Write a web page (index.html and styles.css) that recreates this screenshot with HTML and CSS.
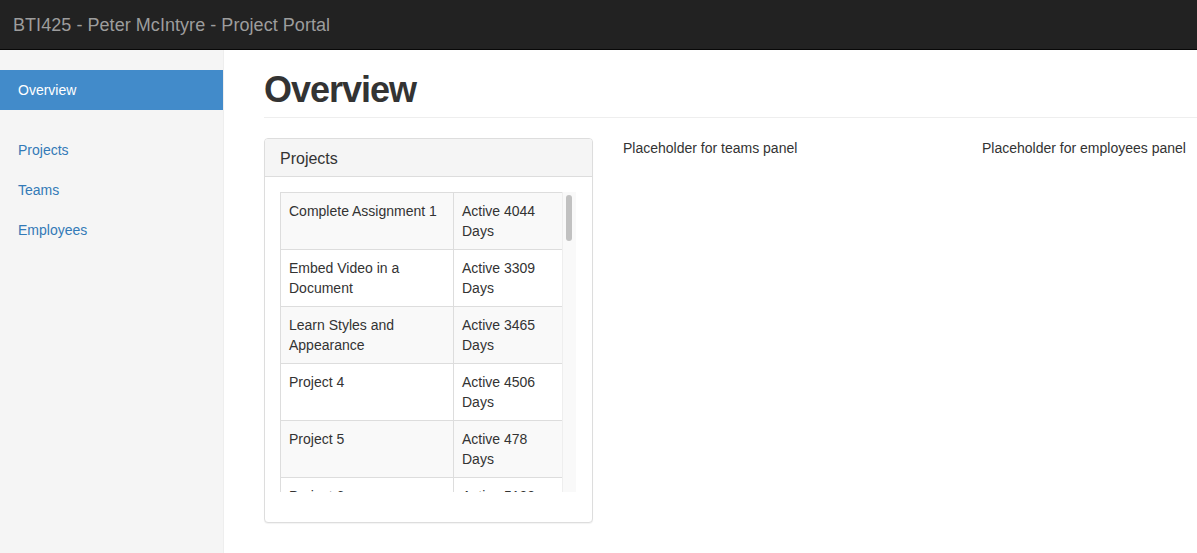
FILE: index.html
```html
<!DOCTYPE html>
<html lang="en">
<head>
<meta charset="utf-8">
<title>BTI425 - Peter McIntyre - Project Portal</title>
<link rel="stylesheet" href="styles.css">
</head>
<body>
<nav class="navbar">
  <a class="brand" href="#">BTI425 - Peter McIntyre - Project Portal</a>
</nav>
<div class="layout">
  <aside class="sidebar">
    <ul class="nav-sidebar">
      <li class="active"><a href="#">Overview</a></li>
    </ul>
    <ul class="nav-sidebar">
      <li><a href="#">Projects</a></li>
      <li><a href="#">Teams</a></li>
      <li><a href="#">Employees</a></li>
    </ul>
  </aside>
  <main class="main">
    <h1 class="page-header">Overview</h1>
    <div class="row">
      <div class="panel">
        <div class="panel-heading">Projects</div>
        <div class="panel-body">
          <div class="scroll-box">
            <div class="table-wrap">
              <table class="table">
                <colgroup><col class="c1"><col class="c2"></colgroup>
                <tbody>
                  <tr><td>Complete Assignment 1</td><td>Active 4044 Days</td></tr>
                  <tr><td>Embed Video in a Document</td><td>Active 3309 Days</td></tr>
                  <tr><td>Learn Styles and Appearance</td><td>Active 3465 Days</td></tr>
                  <tr><td>Project 4</td><td>Active 4506 Days</td></tr>
                  <tr><td>Project 5</td><td>Active 478 Days</td></tr>
                  <tr><td>Project 6</td><td>Active 5133 Days</td></tr>
                </tbody>
              </table>
            </div>
            <div class="scrollbar"><div class="thumb"></div></div>
          </div>
        </div>
      </div>
      <div class="placeholder">Placeholder for teams panel</div>
      <div class="placeholder">Placeholder for employees panel</div>
    </div>
  </main>
</div>
</body>
</html>
```
FILE: styles.css
```css
* { box-sizing: border-box; }
html, body {
  margin: 0;
  height: 100%;
  overflow: hidden;
}
body {
  font-family: "Liberation Sans", Arial, sans-serif;
  font-size: 14px;
  line-height: 20px;
  color: #333;
  background: #fff;
}
a { text-decoration: none; }

.navbar {
  height: 50px;
  background: #222;
  border-bottom: 1px solid #080808;
  display: flex;
  align-items: center;
  padding: 0 13px;
}
.brand {
  color: #9d9d9d;
  font-size: 18px;
  line-height: 20px;
  letter-spacing: 0.05px;
}

.layout {
  display: flex;
  height: calc(100% - 50px);
}
.sidebar {
  width: 224px;
  flex: none;
  background: #f5f5f5;
  border-right: 1px solid #eee;
  padding-top: 20px;
}
.nav-sidebar {
  list-style: none;
  margin: 0 0 20px;
  padding: 0;
}
.nav-sidebar a {
  display: block;
  padding: 10px 18px;
  color: #337ab7;
  line-height: 20px;
}
.nav-sidebar .active a {
  background: #428bca;
  color: #fff;
}

.main {
  flex: 1;
  min-width: 0;
  overflow: hidden;
  padding: 20px 0 20px 40px;
}
.page-header {
  margin: 0 0 20px;
  padding-bottom: 7px;
  border-bottom: 1px solid #eee;
  font-size: 36px;
  line-height: 40px;
  font-weight: 700;
  letter-spacing: -1px;
  color: #333;
}

.row {
  display: grid;
  grid-template-columns: 329px 329px 329px;
  column-gap: 30px;
  align-items: start;
  width: 1100px;
}

.panel {
  border: 1px solid #ddd;
  border-radius: 4px;
  box-shadow: 0 1px 1px rgba(0,0,0,0.05);
  background: #fff;
}
.panel-heading {
  background: #f5f5f5;
  border-bottom: 1px solid #ddd;
  border-radius: 3px 3px 0 0;
  padding: 11px 15px 9px;
  font-size: 16px;
  line-height: 17px;
  color: #333;
}
.panel-body {
  padding: 15px 15px 30px;
}
.scroll-box {
  display: flex;
  height: 300px;
  width: 296px;
}
.table-wrap {
  width: 282px;
  height: 300px;
  overflow: hidden;
  flex: none;
}
.scrollbar {
  width: 14px;
  height: 300px;
  flex: none;
  background: #f9f9f9;
  border-left: 1px solid #eeeeee;
  padding: 3px 4px 0 3px;
}
.thumb {
  height: 46px;
  background: #c1c1c1;
  border-radius: 4px;
}

.table {
  width: 282px;
  table-layout: fixed;
  border-collapse: collapse;
}
.table .c1 { width: 173px; }
.table .c2 { width: 109px; }
.table td {
  border: 1px solid #ddd;
  padding: 8px;
  vertical-align: top;
  line-height: 20px;
}
.table tr:nth-child(odd) td {
  background: #f9f9f9;
}

.placeholder {
  line-height: 20px;
}
```
